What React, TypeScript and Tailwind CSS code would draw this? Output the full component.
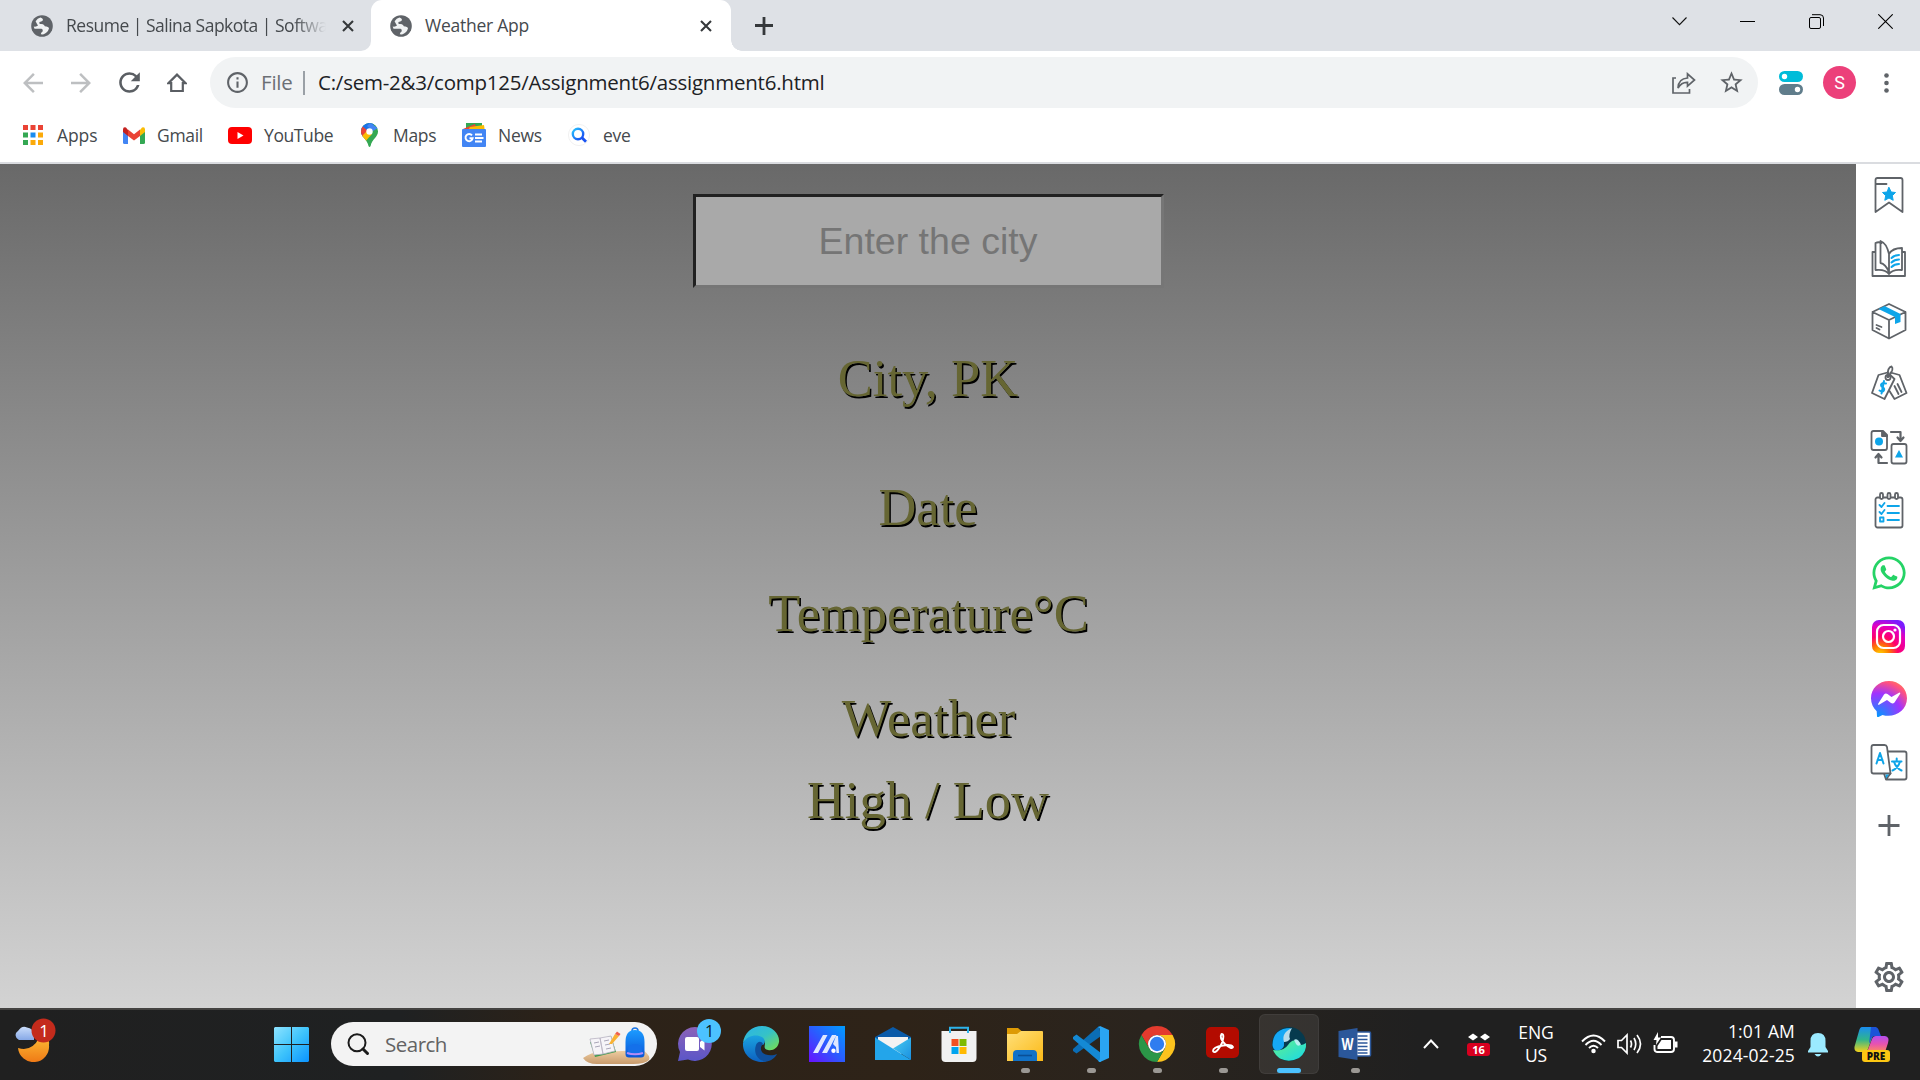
import React from "react";
import { MdArrowBack, MdArrowForward, MdRefresh, MdInfoOutline, MdStarOutline, MdOutlineSettings } from "react-icons/md";
import { FaWhatsapp } from "react-icons/fa";

const UI = "font-['Open_Sans','Noto_Sans',sans-serif]";

function Globe() {
  return (
    <svg width="22" height="22" viewBox="0 0 22 22" className="shrink-0">
      <circle cx="11" cy="11" r="10.8" fill="#5f6368" />
      <path d="M9.500 2.600Q13 4.200 11.500 5.800Q10.500 6.800 8.500 7Q7.800 8.300 9 9Q12 8.600 13.200 10.200Q13.500 11.800 15.500 11.600Q18 12 18 13.500Q16.500 18.300 12 19.400L9.800 19.300Q9.800 17.500 11.600 16.500Q12.500 14.500 10.500 13.800H3.500L2.700 11.500Q5.500 12 7 10.500Q6 9 4.600 6.200Q6.500 3.500 9.500 2.600Z" fill="#f1f3f4" />
    </svg>
  );
}

function Cross() {
  return (
    <svg width="12" height="12" viewBox="0 0 12 12" className="shrink-0">
      <path d="M1 1L11 11M11 1L1 11" stroke="#35383b" strokeWidth="2.1" />
    </svg>
  );
}

function TabStrip() {
  return (
    <div className="flex h-[51px] w-full bg-[#dee1e6] text-[17.5px] leading-[51px] text-[#45494d]">
      <div className="flex w-[371px] items-center bg-white">
        <div className="flex h-full w-[371px] items-center rounded-br-[10px] bg-[#dee1e6] pl-[31px]">
          <Globe />
          <span className="ml-[13px] w-[270px] shrink-0 whitespace-nowrap tracking-[-0.5px] [mask-image:linear-gradient(to_right,black_228px,transparent_260px)]">
            Resume | Salina Sapkota | Softwa
          </span>
          <span className="ml-[6px] flex"><Cross /></span>
        </div>
      </div>
      <div className="relative flex w-[360px] items-center rounded-t-[11px] bg-white pl-[19px]">
        <span className="absolute bottom-0 right-[-11px] h-[11px] w-[11px] bg-[radial-gradient(circle_at_100%_0,transparent_10.5px,white_11px)]" />
        <Globe />
        <span className="ml-[13px] w-[275px] whitespace-nowrap tracking-[-0.25px]">Weather App</span>
        <Cross />
      </div>
      <svg width="18" height="18" className="ml-[24px] mt-[17px]"><path d="M9 0V18M0 8.500H18" stroke="#35383b" strokeWidth="2.800" /></svg>
      <div className="ml-auto mr-[27px] flex h-[43px] items-center">
        <svg width="15" height="9"><path d="M0.5 0.5L7.5 7.7L14.5 0.5" stroke="#111" fill="none" strokeWidth="1.1" /></svg>
        <svg width="15" height="15" className="ml-[53px]"><path d="M0 7.5H15" stroke="#000" /></svg>
        <svg width="15" height="15" className="ml-[54px]" fill="none" stroke="#000">
          <rect x="0.5" y="3.5" width="11" height="11" rx="1.5" />
          <path d="M3 0.7H11Q14.5 0.7 14.5 4V12" />
        </svg>
        <svg width="15" height="15" className="ml-[54px]"><path d="M0.3 0.3L14.7 14.7M14.7 0.3L0.3 14.7" stroke="#000" strokeWidth="1.1" /></svg>
      </div>
    </div>
  );
}

function Toolbar() {
  return (
    <div className="flex h-[63px] w-full items-center bg-white">
      <MdArrowBack size={30} color="#bdbfc1" className="ml-[18px] shrink-0" />
      <MdArrowForward size={30} color="#bdbfc1" className="ml-[18px] shrink-0" />
      <MdRefresh size={31} color="#5a5e63" className="ml-[18px] shrink-0" />
      <svg width="20" height="20" viewBox="0 0 20 20" className="ml-[22px] shrink-0">
        <path d="M10 1.6L1.4 10.2H4.2V18H15.8V10.2H18.6Z" fill="none" stroke="#5a5e63" strokeWidth="2.2" />
      </svg>
      <div className="ml-[23px] flex h-[51px] w-[1548px] shrink-0 items-center rounded-full bg-[#f1f3f4] pl-[15px]">
        <MdInfoOutline size={25} color="#5f6368" className="shrink-0" />
        <span className="ml-[11px] w-[42px] text-[20.5px] tracking-[-0.2px] text-[#6b6f74]">File</span>
        <span className="h-[24px] w-[2px] bg-[#9aa0a6]" />
        <span className="ml-[13px] whitespace-nowrap text-[20.5px] tracking-[-0.23px] text-[#202124]">C:/sem-2&amp;3/comp125/Assignment6/assignment6.html</span>
        <svg width="24" height="22" viewBox="0 0 24 22" className="ml-auto mr-[22px] shrink-0" fill="none" stroke="#5f6368" strokeWidth="1.7">
          <path d="M4 6H1V21H17.5V17" />
          <path d="M6 16Q6.500 6.500 15.500 6V1.800L22.500 8L15.500 14.200V10.300Q9.500 10 6 16Z" />
        </svg>
        <MdStarOutline size={27} color="#5f6368" className="mr-[13px] shrink-0" />
      </div>
      <svg width="24" height="24" className="ml-[21px] shrink-0">
        <rect width="24" height="11" rx="5.5" fill="#00bcd9" /><circle cx="5.500" cy="5.500" r="2.700" fill="#fff" />
        <rect y="13" width="24" height="11" rx="5.5" fill="#607d8b" /><circle cx="18.500" cy="18.500" r="2.700" fill="#fff" />
      </svg>
      <span className="ml-[20px] flex h-[33px] w-[33px] shrink-0 items-center justify-center rounded-full bg-[#ec407a] font-['Roboto'] text-[18px] text-white">S</span>
      <svg width="5" height="20" className="ml-[28px] shrink-0" fill="#5f6368"><circle cx="2.500" cy="2.500" r="2.300" /><circle cx="2.500" cy="10" r="2.300" /><circle cx="2.500" cy="17.500" r="2.300" /></svg>
    </div>
  );
}

const APP_COLORS = ["#ea4335", "#ea4335", "#ea4335", "#34a853", "#1a8cf0", "#fbaa0a", "#34a853", "#fbaa0a", "#fbaa0a"];

function Bookmarks() {
  return (
    <div className="flex h-[50px] w-full items-center bg-white pb-[8px] pl-[23px] text-[17.5px] leading-[24px] tracking-[-0.3px] text-[#45494d]">
      <svg width="20" height="20">
        {APP_COLORS.map((c, i) => <rect key={i} x={(i % 3) * 7.5} y={Math.floor(i / 3) * 7.5} width="5" height="5" fill={c} />)}
      </svg>
      <span className="mb-px ml-[14px] w-[66px] tracking-[-0.1px]">Apps</span>
      <svg width="22" height="17" viewBox="0 0 22 17">
        <path d="M0 2V15.500Q0 17 1.500 17H5V5Z" fill="#4285f4" />
        <path d="M22 2V15.500Q22 17 20.500 17H17V5Z" fill="#34a853" />
        <path d="M17 3L19 0.500Q22 -0.500 22 2.500V5L17 9Z" fill="#fbbc04" />
        <path d="M5 3L3 0.500Q0 -0.500 0 2.500V5L5 9Z" fill="#c5221f" />
        <path d="M5 2.500L11 7.200L17 2.500V9L11 13.500L5 9Z" fill="#ea4335" />
      </svg>
      <span className="mb-px ml-[12px] w-[71px]">Gmail</span>
      <svg width="24" height="17"><rect width="24" height="17" rx="4" fill="#f00" /><path d="M9.500 5L15.500 8.500L9.500 12Z" fill="#fff" /></svg>
      <span className="mb-px ml-[12px] w-[97px] tracking-[-0.4px]">YouTube</span>
      <svg width="17" height="24" viewBox="0 0 17 24">
        <defs><clipPath id="pin"><path d="M8.500 0A8.400 8.400 0 0 1 17 8.500C17 14 11 16 9.600 23Q8.500 25 7.500 23C6 16 0 14 0 8.500A8.400 8.400 0 0 1 8.500 0Z" /></clipPath></defs>
        <g clipPath="url(#pin)">
          <rect width="17" height="24" fill="#34a853" />
          <path d="M0 15L17 -3V-5H0Z" fill="#1a73e8" />
          <path d="M9 0L17 5L12 8L6 3Z" fill="#4285f4" />
          <path d="M0 2L7 8L-1 17Z" fill="#ea4335" />
          <path d="M-1 15L6 8L11 11L3 20Z" fill="#fbbc04" />
        </g>
        <circle cx="8.500" cy="8.500" r="3.200" fill="#fff" />
      </svg>
      <span className="mb-px ml-[15px] w-[69px]">Maps</span>
      <svg width="24" height="24">
        <path d="M4 0H20V8H4Z" fill="#34a853" /><path d="M1 6L13 1L15 8H1Z" fill="#ea4335" /><path d="M8 4L22 2L23 9H5Z" fill="#fbbc04" />
        <rect y="6" width="24" height="18" rx="1" fill="#4285f4" />
        <path d="M10 12.400A3.600 3.600 0 1 0 10.700 15.200H7.500" stroke="#fff" strokeWidth="1.900" fill="none" />
        <path d="M13 11.500H20M13 15H21.500M13 18.500H20" stroke="#fff" strokeWidth="1.900" />
      </svg>
      <span className="mb-px ml-[12px] w-[70px]">News</span>
      <svg width="22" height="22">
        <defs><linearGradient id="eve" x1="0" y1="0" x2="1" y2="1"><stop stopColor="#27c4ff" /><stop offset="1" stopColor="#1743f0" /></linearGradient></defs>
        <circle cx="11" cy="11" r="10.600" fill="#fff" stroke="#eee" strokeWidth="0.800" />
        <circle cx="10" cy="10" r="5.200" stroke="url(#eve)" strokeWidth="2.400" fill="none" />
        <path d="M13.800 13.500L18 17.800" stroke="#1853f2" strokeWidth="2.800" />
      </svg>
      <span className="mb-px ml-[13px]">eve</span>
    </div>
  );
}

const HEADING = "text-[52.5px] leading-[60px] text-[#666633] [text-shadow:1.5px_1.5px_#000]";

function WeatherPage() {
  return (
    <main className="flex h-full w-[1856px] flex-col items-center bg-[linear-gradient(to_bottom,#696969,#d3d3d3)] pt-[30px] font-['Liberation_Serif','Times_New_Roman',serif]">
      <div className="flex h-[94px] w-[471px] items-center justify-center border-3 border-b-[#767676] border-l-[#212121] border-r-[#767676] border-t-[#212121] bg-[#a9a9a9] font-['Liberation_Sans',Arial,sans-serif] text-[37.5px] text-[#757575]">
        Enter the city
      </div>
      <div className={`mt-[60px] ${HEADING}`}>City, PK</div>
      <div className={`mt-[69px] ${HEADING}`}>Date</div>
      <div className={`mt-[46px] pl-px ${HEADING}`}>Temperature°C</div>
      <div className={`mt-[45px] pl-px ${HEADING}`}>Weather</div>
      <div className={`mt-[22px] ${HEADING}`}>High / Low</div>
    </main>
  );
}

function SideIcon({ children }: { children: React.ReactNode }) {
  return (
    <svg width="38" height="38" viewBox="0 0 38 38" fill="none" stroke="#5f6368" strokeWidth="1.8" strokeLinejoin="round" strokeLinecap="round" className="shrink-0">
      {children}
    </svg>
  );
}

const B = "#0ea5e9";

function Sidebar() {
  return (
    <aside className="flex h-full w-[64px] flex-col items-center gap-[25px] bg-white pl-[2px] pt-[12px]">
      <SideIcon>
        <path d="M7.500 2H30.500Q32.500 2 32.500 4V36L19 26.500L5.500 36V4Q5.500 2 7.500 2ZM6 8H16.500" />
        <path d="M19 11.500L21.200 16L25.500 16.500L22.300 19.700L23.200 24.300L19 22L14.800 24.300L15.700 19.700L12.500 16.500L16.800 16Z" fill={B} stroke={B} strokeWidth="1" />
      </SideIcon>
      <SideIcon>
        <path d="M5.500 13H2.500V37H35V13H32M19 35Q15.500 30 5.500 31V4Q8.500 2.500 11.500 4M19 35Q22.500 30 32 31V9Q22.500 9 19 15V35M19 15Q16.500 4 10.500 2V24Q15.500 25 19 33" />
        <path d="M21.500 19Q24.500 16 29 16M21.500 23.500Q24.500 20.500 29 20.500M21.500 28Q24.500 25 29 25" stroke={B} strokeWidth="2" />
      </SideIcon>
      <SideIcon>
        <path d="M19 2L35.500 10V28L19 36.500L2.500 28V10ZM2.500 10L19 18L35.500 10M19 18V36M6.500 23L11.500 25M6.500 26L9.500 27.500" />
        <path d="M8.500 7L14.500 4L30.500 12V20L25 22V15Z" fill={B} stroke="none" />
      </SideIcon>
      <SideIcon>
        <path d="M20.500 7.500L29.500 10L36.500 28L24.500 34L19.500 26M27.500 19L31.500 27M24.500 21L28.500 29" />
        <path d="M8.500 10L17.500 7.500L24.500 14L14.500 34L2 28Z" fill="#fff" />
        <circle cx="18" cy="12.500" r="2.500" />
        <path d="M17.500 12Q17.500 2 21.500 1.500Q24.500 4 18.500 12" />
        <path d="M16 18.500Q11.500 17 11 20Q11 21.500 13 22.500Q15 24 13.500 26Q11.500 27 9.500 25.500M14 16L11.500 28.500" stroke={B} strokeWidth="2" />
      </SideIcon>
      <SideIcon>
        <path d="M3.500 3H13L17 7V20Q17 22 15 22H3.500Q1.500 22 1.500 20V5Q1.500 3 3.500 3Z" />
        <path d="M12 3L17 8H12Z" fill="#5f6368" />
        <rect x="21.500" y="16" width="15" height="19.500" rx="2" />
        <circle cx="9" cy="13.500" r="4" fill={B} stroke="none" /><path d="M29 22L33 29.500H25Z" fill={B} stroke="none" />
        <path d="M21 4H30.500V12M27.500 9.500L30.500 13L33.500 9.500M17 35H8.500V27M5.500 29.500L8.500 26L11.500 29.500" strokeWidth="2.200" />
      </SideIcon>
      <SideIcon>
        <rect x="5.500" y="6.500" width="27" height="30" rx="2" />
        {[11.5, 19, 26.5].map((x) => <rect key={x} x={x - 1.5} y="2" width="3" height="6" rx="1.5" fill="#fff" />)}
        <path d="M9.500 14L11.500 16L14.500 12M9.500 21L11.500 23L14.500 19M10 26.500H13.500V30.500H10ZM17.500 15H29M17.500 22H29M17.500 29H29" stroke={B} />
      </SideIcon>
      <div className="flex h-[38px] w-[38px] items-center justify-center"><FaWhatsapp size={38} color="#25d366" className="shrink-0" /></div>
      <SideIcon>
        <defs>
          <radialGradient id="ig" cx="0.25" cy="1.05" r="1.1"><stop stopColor="#ffd600" /><stop offset="0.25" stopColor="#ff7a00" /><stop offset="0.5" stopColor="#ff0069" /><stop offset="0.8" stopColor="#e300c0" /><stop offset="1" stopColor="#7a1cff" /></radialGradient>
        </defs>
        <rect x="2" y="3" width="33" height="33" rx="7" fill="url(#ig)" stroke="none" />
        <g stroke="#fff" strokeWidth="2.200"><rect x="7" y="8" width="23" height="23" rx="6.500" /><circle cx="18.500" cy="19.500" r="5.500" /></g>
        <circle cx="25" cy="13" r="1.600" fill="#fff" stroke="none" />
      </SideIcon>
      <SideIcon>
        <defs>
          <radialGradient id="ms" cx="0.2" cy="1" r="1.1"><stop stopColor="#0099ff" /><stop offset="0.6" stopColor="#a033ff" /><stop offset="0.9" stopColor="#ff5280" /><stop offset="1" stopColor="#ff7061" /></radialGradient>
        </defs>
        <path d="M19 1C8.500 1 1 8.500 1 18.300C1 23.500 3.200 28 6.700 31.200L7 36.500Q7.500 37.300 8.500 37L12.500 35C24 38.500 37 31 37 18.300C37 8.500 29 1 19 1Z" fill="url(#ms)" stroke="none" />
        <path d="M8 24L14 14.500Q15.500 13 17.500 14L21.500 17L29.500 12.500Q31 12.500 30 14L24.500 22.500Q23 24 21 23L17 20L9 24.800Q7.500 25 8 24Z" fill="#fff" stroke="none" />
      </SideIcon>
      <SideIcon>
        <path d="M17.500 8.500H34.500Q36.500 8.500 36.500 10.500V34.500Q36.500 36.500 34.500 36.500H16L14 30.500M16 36.500L20.500 30.500" />
        <path d="M3.500 2H14.500Q16.500 2 17 4L20.500 30.500H3.500Q1.500 30.500 1.500 28.500V4Q1.500 2 3.500 2Z" fill="#fff" />
        <path d="M15.500 31.500H19L16 35.500Z" fill={B} stroke="none" />
        <path d="M6.500 20.500L10 10L13.500 20.500M7.500 17H12.500M22 18.500H31.500M26.700 15.500V18.500M30 18.500Q28.500 24.500 22.500 27.500M24 18.500Q25.500 24.500 31.500 27.500" stroke={B} strokeWidth="2" />
      </SideIcon>
      <SideIcon><path d="M19 9V30M8.500 19.500H29.500" strokeWidth="2.800" strokeLinecap="butt" /></SideIcon>
      <MdOutlineSettings size={36} color="#5f6368" className="mb-[13px] mt-auto shrink-0" />
    </aside>
  );
}

function Slot({ children, state = "none" }: { children: React.ReactNode; state?: "none" | "open" | "active" }) {
  return (
    <div className="flex w-[66px] shrink-0 justify-center">
      <div className={`relative flex h-[60px] w-[60px] items-center justify-center rounded-[6px] ${state === "active" ? "border border-white/5 bg-white/8" : ""}`}>
        <svg width="40" height="40" viewBox="-20 -20 40 40" className="overflow-visible">{children}</svg>
        {state === "open" && <span className="absolute bottom-[1px] h-[5px] w-[9px] rounded-full bg-[#9b9894]" />}
        {state === "active" && <span className="absolute bottom-0 h-[5px] w-[24px] rounded-full bg-[#4cc2ff]" />}
      </div>
    </div>
  );
}

function Grad({ id, a, b, m, v }: { id: string; a: string; b: string; m?: string; v?: boolean }) {
  return (
    <linearGradient id={id} x1="0" y1="0" x2={v ? "0" : "1"} y2="1">
      <stop stopColor={a} />{m && <stop offset="0.5" stopColor={m} />}<stop offset="1" stopColor={b} />
    </linearGradient>
  );
}

function Taskbar() {
  return (
    <footer className="flex h-[72px] w-full items-center border-t-2 border-[#444341] bg-[linear-gradient(90deg,#202020_0px,#1f2122_400px,#2c2218_560px,#2e2318_900px,#2a241e_1150px,#202020_1420px)] pb-[2px] text-[17.5px] text-white">
      <svg width="46" height="44" viewBox="0 0 46 44" className="mb-[8px] ml-[14px] shrink-0">
        <defs><Grad id="moon" a="#ffc63a" b="#ef7a16" v /><Grad id="cloud" a="#c9dcfa" b="#86a8e6" v /></defs>
        <path d="M29 14Q36 18 35 27A15.500 15.500 0 0 1 4 30Q18 34 25 20Z" fill="url(#moon)" />
        <path d="M5 22A5 5 0 0 1 4 13Q8 7 13 9.500Q19 10.500 20 15.500V22Z" fill="url(#cloud)" />
        <circle cx="29.500" cy="12.500" r="12" fill="#c42b1c" />
        <text x="30" y="18.800" textAnchor="middle" fontSize="17" fill="#fff">1</text>
      </svg>
      <svg width="35" height="35" viewBox="0 0 35 35" className="ml-[214px] shrink-0">
        <defs><linearGradient id="win" gradientUnits="userSpaceOnUse" x1="0" y1="0" x2="35" y2="35"><stop stopColor="#8ee3ff" /><stop offset="0.5" stopColor="#3fc4fb" /><stop offset="1" stopColor="#0a93ff" /></linearGradient></defs>
        <path d="M1 0H17V17H0V1ZM18 0H34L35 1V17H18ZM0 18H17V35H1L0 34ZM18 18H35V34L34 35H18Z" fill="url(#win)" />
      </svg>
      <div className="ml-[22px] flex h-[44px] w-[326px] shrink-0 items-center overflow-hidden rounded-full bg-[#f3f3f3] pl-[16px]">
        <svg width="23" height="23" fill="none" stroke="#1b1b1b"><circle cx="10" cy="9.700" r="8.500" strokeWidth="2" /><path d="M16 16L20.500 20.500" strokeWidth="3" strokeLinecap="round" /></svg>
        <span className="ml-[15px] text-[20.5px] tracking-[-0.5px] text-[#636363]">Search</span>
        <svg width="70" height="44" viewBox="0 0 70 44" className="ml-auto mr-[4px]">
          <defs><Grad id="bag" a="#1b9bff" b="#0a55d8" v /><Grad id="sand" a="#f0cfa4" b="#c89b6c" v /></defs>
          <path d="M0 36Q8 30 18 30L60 28Q68 34 66 38Q62 42 50 42H14Q4 42 0 36Z" fill="url(#sand)" />
          <path d="M7 20L28 14L33 30L12 35Z" fill="#3c9b4e" />
          <path d="M7 17L17 16L20 32L11 33ZM17 16L28 14L32 29L20 32Z" fill="#f6f4f8" stroke="#b7b2c2" strokeWidth="0.800" />
          <path d="M11 21L16 20M12 25L17 24M21 19L26 18M22 23L27 22M23 27L28 26" stroke="#aaa6b8" />
          <path d="M26 22L32 12L36 14L29 22Z" fill="#f9b233" /><path d="M32 12L34 9.500L37.500 12L36 14Z" fill="#f0604d" />
          <circle cx="52" cy="9" r="3" fill="none" stroke="#1976e8" strokeWidth="1.500" />
          <path d="M42.500 20Q42.500 8 52 8Q61.500 8 61.500 20V32Q61.500 35.500 58 35.500H46Q42.500 35.500 42.500 32Z" fill="url(#bag)" />
          <path d="M45 28Q45 22 52 22Q59 22 59 28V33H45Z" fill="#1470ea" /><path d="M44 31Q52 33.500 60 31" stroke="#b48cf5" strokeWidth="2" fill="none" />
        </svg>
      </div>
      <div className="ml-[5px] flex">
        <Slot>
          <defs><Grad id="chat" a="#8b62b8" b="#5b56c8" v /></defs>
          <path d="M0 -17A17 17 0 1 1 -7 15.600L-17 17L-15 8A17 17 0 0 1 0 -17Z" fill="url(#chat)" />
          <rect x="-10" y="-7" width="14" height="14" rx="2" fill="#fff" /><path d="M5 -2L9.500 -6V6.500L5 3Z" fill="#fff" />
          <circle cx="14" cy="-13" r="12" fill="#4cc2ff" />
          <text x="14.500" y="-7" textAnchor="middle" fontSize="16" fill="#0b1b25">1</text>
        </Slot>
        <Slot>
          <defs><Grad id="e1" a="#2bb3e8" m="#35c2c8" b="#7be04a" /><Grad id="e2" a="#1ba3e0" b="#0c60c0" v /></defs>
          <path d="M-18 -1C-17 -11 -9 -18 1 -18C12 -18 19 -9 18 -2C17 4 12 7 7 6C2 5 4 2 4 -1C3 -8 -10 -11 -18 -1Z" fill="url(#e1)" />
          <path d="M-18 -1C-14 -9 -4 -10 1 -7C5 -4 4 -1 2 1C-3 -1 -6 4 -4 9C-2 15 4 18 7 17C-3 21 -19 14 -18 -1Z" fill="url(#e2)" />
          <path d="M-5 1C-8 9 -3 17 5 17.500C10 17 14 14 16 10C12 12 4 12 1 8C-1 5 0 2 2 0C0 -4 -4 -2 -5 1Z" fill="#0f4f9c" />
        </Slot>
        <Slot>
          <defs><linearGradient id="ma" x1="0" y1="1" x2="1" y2="0"><stop stopColor="#6a10ff" /><stop offset="0.500" stopColor="#2a5cff" /><stop offset="1" stopColor="#009dff" /></linearGradient></defs>
          <rect x="-18" y="-18" width="36" height="36" fill="url(#ma)" />
          <path d="M-14 9L-4 -9H0.500L-9 9ZM-5 9L5 -9H9.500L0 9ZM6 0L9 -8H11L12 9H9.500L9 3Z" fill="#dfe7ff" /><circle cx="6.500" cy="6.700" r="2.200" fill="#fff" />
        </Slot>
        <Slot>
          <defs><Grad id="mail" a="#48cdf2" b="#1a8fe0" /></defs>
          <path d="M-18 -7L0 -17L18 -7V5H-18Z" fill="#0a5aa8" /><path d="M-15 -7H15V6L0 14L-15 6Z" fill="#f3f3f3" />
          <path d="M-18 -6.500L18 16H-18Z" fill="#23a5ea" /><path d="M18 -6.500V16L0 4.500Z" fill="url(#mail)" />
        </Slot>
        <Slot>
          <path d="M-17.500 -13H17.500V14Q17.500 18 13.500 18H-13.500Q-17.500 18 -17.500 14Z" fill="#f1f1f1" />
          <path d="M-9 -11V-16.200H9V-11" fill="none" stroke="#2db3ea" strokeWidth="2" />
          <path d="M-7.500 -5H-0.500V2H-7.500Z" fill="#f25022" /><path d="M0.500 -5H7.500V2H0.500Z" fill="#7fba00" /><path d="M-7.500 3H-0.500V10H-7.500Z" fill="#00a4ef" /><path d="M0.500 3H7.500V10H0.500Z" fill="#ffb900" />
        </Slot>
        <Slot state="open">
          <defs><Grad id="fold" a="#ffe07a" b="#fbb917" /></defs>
          <path d="M-18 -16H-7L-3 -12.500L-6 -8H-18Z" fill="#dd9a05" />
          <path d="M-18 -10H-8L-4 -13H17Q18 -13 18 -12V17H-18Z" fill="url(#fold)" />
          <path d="M-12 17V10Q-12 6 -8 6H8Q12 6 12 10V17Z" fill="#1272c8" /><path d="M-7 11.500H7" stroke="#0a4f96" strokeWidth="1.600" />
        </Slot>
        <Slot state="open">
          <path d="M8 -18L-18 5V7L-14.500 9.500L10 -8Z" fill="#0b6db5" />
          <path d="M-18 -5V-7L-14.500 -9.500L10 9V18Q8 18 7 16.500L-18 -5Z" fill="#1489d4" />
          <path d="M9 -18L18 -14V14L9 18Q8 18 7 16.500Q9 17 9 14V-14Q9 -17 7 -16.500Z" fill="#2aa5f2" />
        </Slot>
        <Slot state="open">
          <path d="M-15.600 -9A18 18 0 0 1 15.600 -9H0A9 9 0 0 0 -7.800 4.500Z" fill="#e33b2e" />
          <path d="M15.600 -9A18 18 0 0 1 0 18L7.800 4.500A9 9 0 0 0 0 -9Z" fill="#fcc31e" />
          <path d="M0 18A18 18 0 0 1 -15.600 -9L-7.800 4.500A9 9 0 0 0 7.800 4.500Z" fill="#2b9647" />
          <circle r="9" fill="#fff" /><circle r="7.200" fill="#2f7df0" />
        </Slot>
        <Slot state="open">
          <rect x="-17" y="-17" width="33" height="31" rx="5" fill="#b30b00" />
          <path d="M-10 7Q-10 3 0 1.500Q8 0 10 3Q9 6 2 0Q-4 -6 -1.500 -10Q2 -10 -1 -1Q-5 7 -8 8Q-9.500 8.500 -10 7Z" fill="none" stroke="#fff" strokeWidth="1.900" strokeLinejoin="round" />
        </Slot>
        <Slot state="active">
          <defs><Grad id="wv" a="#63f08c" b="#18d9e8" /></defs>
          <circle r="17" fill="#063a4e" />
          <path d="M2 -16Q-16 -16 -16.500 1Q-16 6 -12 7Q-4 5 -5 -1Q-6 -8 2 -16Z" fill="#16a8f5" />
          <path d="M-5 -2Q-8 -11 3 -16Q-1 -9 1 -5Q-1 -2 -5 -2Z" fill="#b9dcea" />
          <path d="M-16 6Q-6 8 -1 1Q3 -5 7 -3Q10 4 17 -1Q18 8 10 14Q0 19 -9 14.500Q-14 11 -16 6Z" fill="url(#wv)" />
          <path d="M5 -4Q8 -7 12 0.500Q9 3 7 0Z" fill="#b7eef0" />
        </Slot>
        <Slot state="open">
          <g transform="translate(-0.500 0)">
            <path d="M-2 -12H15Q16 -12 16 -11V11Q16 12 15 12H-2Z" fill="#fff" stroke="#2b579a" strokeWidth="1.500" />
            <path d="M3 -8H13M3 -4.500H13M3 -1H13M3 2.500H13M3 6H13M3 9H13" stroke="#2b579a" strokeWidth="1.700" />
            <path d="M-16 -13L3 -16V16L-16 13Z" fill="#2b579a" />
            <text x="-7" y="6" textAnchor="middle" fontSize="16" fontWeight="700" fill="#fff" textLength="12" lengthAdjust="spacingAndGlyphs">W</text>
          </g>
        </Slot>
      </div>
      <svg width="16" height="10" className="ml-[35px] shrink-0"><path d="M1 9L8 1.500L15 9" stroke="#fff" strokeWidth="2" fill="none" /></svg>
      <div className="ml-[28px] flex w-[23px] shrink-0 flex-col items-center gap-[2px] pt-px">
        <svg width="22" height="8"><path d="M0 4L5 0.500L10 4L5 7.500ZM12 4L17 0.500L22 4L17 7.500Z" fill="#fff" /></svg>
        <span className="w-full rounded-[3px] bg-[#d8001f] text-center text-[11px] font-bold leading-[13px]">16</span>
      </div>
      <div className="ml-[23px] w-[46px] shrink-0 text-center leading-[23px] tracking-[-0.1px]">ENG<br />US</div>
      <svg width="25" height="20" viewBox="0 0 25 20" className="ml-[22px] shrink-0" fill="none" stroke="#fff" strokeWidth="1.900">
        <path d="M1 7.500Q12.500 -4.500 24 7.500M4.500 11Q12.500 2.500 20.500 11M8 14Q12.500 9.500 17 14" /><circle cx="12.500" cy="17" r="1.300" fill="#fff" />
      </svg>
      <svg width="25" height="22" viewBox="0 0 25 22" className="ml-[11px] shrink-0" fill="none" stroke="#fff" strokeWidth="1.700">
        <path d="M1 7.500H4.500L10 2V20L4.500 14.500H1ZM13.500 7.500Q15.500 11 13.500 14.500M17 5Q20.500 11 17 17M20 2Q27 11 20 20" />
      </svg>
      <svg width="25" height="22" viewBox="0 0 25 22" className="mb-[3px] ml-[11px] shrink-0">
        <path d="M8 5H18Q21 5 21 8V17Q21 20 18 20H4Q1.500 20 1.500 17V13" fill="none" stroke="#fff" strokeWidth="1.900" />
        <path d="M8.500 8H18V17H4.500V14ZM22 9.500H24.500V15.500H22ZM5 0L0.500 8H3.500L3 13L8 5.500H5Z" fill="#fff" />
      </svg>
      <div className="mb-[2px] ml-[16px] w-[101px] shrink-0 text-right leading-[24px] tracking-[0.15px]">1:01 AM<br />2024-02-25</div>
      <svg width="20" height="24" viewBox="0 0 20 24" className="ml-[13px] mt-[2px] shrink-0"><path d="M10 0Q17.500 0 17.500 8V14L20 18V19.500H0V18L2.500 14V8Q2.500 0 10 0ZM6.500 21H13.500Q10 26 6.500 21Z" fill="#9beaff" /></svg>
      <svg width="36" height="36" viewBox="0 0 36 36" className="ml-[26px] shrink-0">
        <defs><Grad id="c1" a="#1a8df0" m="#30b58c" b="#f5d21a" v /><Grad id="c2" a="#b44ff0" m="#e752b0" b="#ff8a5c" v /></defs>
        <path d="M8 1H22L14 23Q13 26 10 26H4Q-1 25 1 19L5 5Q6 1 8 1Z" fill="url(#c1)" />
        <path d="M17 1H21Q24 1 25 5L27 10H21Q18 10 17 13L15 18Z" fill="#1c53d8" />
        <path d="M22 10H31Q36 11 34 17L31 26H13L18 13Q19 10 22 10Z" fill="url(#c2)" />
        <rect x="8" y="24" width="28" height="12" rx="3" fill="#fcc713" />
        <text x="22" y="33.600" textAnchor="middle" fontSize="10" fontWeight="800" fill="#111">PRE</text>
      </svg>
    </footer>
  );
}

export default function App() {
  return (
    <div className={`flex h-[1080px] w-[1920px] flex-col overflow-hidden bg-white ${UI}`}>
      <TabStrip />
      <Toolbar />
      <Bookmarks />
      <div className="flex h-[844px] w-full shrink-0 shadow-[0_-2px_0_#dadce0]">
        <WeatherPage />
        <Sidebar />
      </div>
      <Taskbar />
    </div>
  );
}
